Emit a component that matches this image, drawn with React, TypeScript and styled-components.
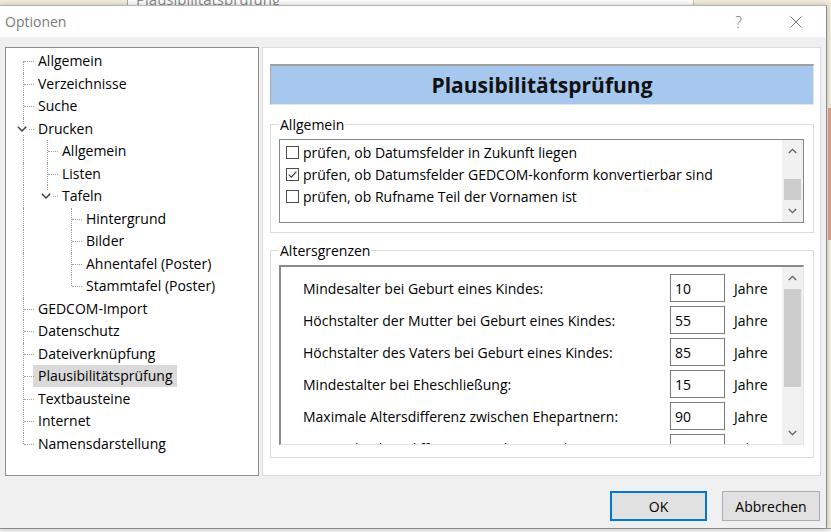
import React from 'react';
import styled, { createGlobalStyle, css } from 'styled-components';

const GlobalStyle = createGlobalStyle`
  html, body {
    margin: 0;
    padding: 0;
  }
  body {
    font-family: 'Open Sans', 'Noto Sans', sans-serif;
    font-size: 14px;
    color: #000;
    background: #f3eedc;
  }
  * {
    box-sizing: border-box;
  }
`;

const Desktop = styled.div`
  position: relative;
  width: 831px;
  height: 532px;
  overflow: hidden;
  background: #f3eedc;
`;

/* windows lying behind the dialog, only their edges are visible */
const BehindTop = styled.div`
  position: absolute;
  left: 127px;
  top: -30px;
  width: 567px;
  height: 35px;
  background: #fff;
  border-left: 1px solid #a8a8a8;
  border-right: 1px solid #c8c8c8;
  display: flex;
  align-items: flex-end;
  padding-left: 8px;
  color: #8a8a8a;
  font-size: 15px;
  line-height: 20px;
`;

const BehindTitle = styled.span`
  margin-bottom: -4px;
`;

const BehindStripe = styled.div`
  position: absolute;
  left: 828px;
  top: 108px;
  width: 3px;
  height: 132px;
  background: #e2a38c;
`;

const BehindBottom = styled.div`
  position: absolute;
  left: 0;
  right: 0;
  top: 528px;
  bottom: 0;
  background: #f0f0f0;
  border-top: 1px solid #9a9a9a;
`;

const Dialog = styled.div`
  position: absolute;
  left: 0;
  top: 5px;
  width: 827px;
  height: 523px;
  background: #f0f0f0;
  border-top: 1px solid #b4b4b4;
  border-right: 1px solid #8c8c8c;
  box-shadow: 0 0 6px rgba(0, 0, 0, 0.25);
  display: flex;
  flex-direction: column;
`;

const TitleBar = styled.div`
  height: 31px;
  flex: none;
  background: #fff;
  display: flex;
  align-items: center;
  padding-left: 5px;
  padding-right: 2px;
`;

const Caption = styled.div`
  flex: 1;
  color: #7a7a7a;
  font-size: 14px;
  padding-bottom: 1px;
`;

const CaptionButton = styled.div`
  width: 57px;
  height: 31px;
  display: flex;
  align-items: center;
  justify-content: center;
  color: #7a7a7a;
  font-size: 16px;
  font-weight: 300;
`;

const Body = styled.div`
  flex: 1;
  display: flex;
  flex-direction: column;
  padding: 10px 5px 0 5px;
`;

const Main = styled.div`
  height: 429px;
  display: flex;
  gap: 3px;
`;

const TreeBox = styled.div`
  width: 254px;
  flex: none;
  background: #fff;
  border: 1px solid #8d8d8d;
  padding: 2px 0 0 5px;
`;

const TreeRow = styled.div`
  height: 22.5px;
  display: flex;
  align-items: center;
`;

const dotted = '1px dotted #a0a0a0';

const Guide = styled.span<{ $line: boolean }>`
  position: relative;
  width: 24px;
  height: 100%;
  flex: none;
  ${(p) =>
    p.$line &&
    css`
      &::before {
        content: '';
        position: absolute;
        left: 12px;
        top: 0;
        bottom: 0;
        border-left: ${dotted};
      }
    `}
`;

const Joint = styled.span<{ $top: boolean; $bottom: boolean }>`
  position: relative;
  width: 24px;
  height: 100%;
  flex: none;

  &::before {
    content: '';
    position: absolute;
    left: 12px;
    top: ${(p) => (p.$top ? '0' : '50%')};
    bottom: ${(p) => (p.$bottom ? '0' : '50%')};
    border-left: ${dotted};
  }

  &::after {
    content: '';
    position: absolute;
    left: 13px;
    width: 10px;
    top: 50%;
    border-top: ${dotted};
  }
`;

const Expander = styled.span`
  position: absolute;
  z-index: 1;
  left: 4px;
  top: 50%;
  width: 13px;
  height: 10px;
  margin-top: -5px;
  background: #fff;
  display: flex;
  align-items: center;
  justify-content: center;
`;

const NodeLabel = styled.span<{ $selected?: boolean }>`
  height: 22px;
  line-height: 22px;
  padding: 0 5px;
  margin-left: -2px;
  white-space: nowrap;
  background: ${(p) => (p.$selected ? '#d9d9d9' : 'transparent')};
`;

const PagePanel = styled.div`
  flex: 1;
  background: #fff;
  border: 1px solid #dadada;
  padding: 16px 6px 0 7px;
  display: flex;
  flex-direction: column;
`;

const PageHeader = styled.div`
  height: 41px;
  flex: none;
  background: #a6c8ef;
  border-top: 2px solid #a0a0a0;
  border-left: 1px solid #a8a8a8;
  border-right: 1px solid #e6e6e6;
  border-bottom: 1px solid #e6e6e6;
  display: flex;
  align-items: center;
  justify-content: center;
  font-size: 21px;
  font-weight: 700;
  color: #111;
`;

const Group = styled.fieldset<{ $gap: number; $padTop: number; $padBottom: number }>`
  margin: ${(p) => p.$gap}px 0 0;
  padding: ${(p) => p.$padTop}px 9px ${(p) => p.$padBottom}px 8px;
  border: 1px solid #dcdcdc;
  min-width: 0;
`;

const Legend = styled.legend`
  padding: 0 1px;
  line-height: 19px;
  font-size: 14px;
`;

const CheckListBox = styled.div`
  height: 84px;
  border: 1px solid #828790;
  display: flex;
  background: #fff;
`;

const CheckItems = styled.div`
  flex: 1;
  padding-top: 1px;
`;

const CheckItem = styled.div`
  height: 22px;
  display: flex;
  align-items: center;
  padding-left: 6px;
  gap: 4px;
  white-space: nowrap;
`;

const CheckBox = styled.span`
  width: 13px;
  height: 13px;
  flex: none;
  border: 1px solid #4d4d4d;
  background: #fff;
  display: flex;
  align-items: center;
  justify-content: center;
`;

const LimitsBox = styled.div`
  height: 180px;
  background: #fff;
  border-top: 2px solid #8a8a8a;
  border-left: 2px solid #8a8a8a;
  border-right: 1px solid #e3e3e3;
  border-bottom: 1px solid #e3e3e3;
  display: flex;
  overflow: hidden;
`;

const LimitRows = styled.div`
  flex: 1;
  padding: 5px 0 0 22px;
  overflow: hidden;
`;

const LimitRow = styled.div`
  height: 32px;
  display: flex;
  align-items: center;
  white-space: nowrap;
`;

const LimitLabel = styled.span`
  width: 367px;
  flex: none;
`;

const NumberField = styled.input`
  width: 55px;
  height: 28px;
  flex: none;
  border: 1px solid #7a7a7a;
  padding: 0 0 0 4px;
  font: inherit;
  color: #000;
  background: #fff;
  outline: none;
`;

const Unit = styled.span`
  margin-left: 9px;
`;

const ScrollBar = styled.div`
  width: 21px;
  flex: none;
  background: #f0f0f0;
  display: flex;
  flex-direction: column;
`;

const ScrollArrow = styled.div`
  height: 22px;
  flex: none;
  display: flex;
  align-items: center;
  justify-content: center;
`;

const ScrollTrack = styled.div`
  flex: 1;
  padding: 0 2px;
`;

const ScrollThumb = styled.div<{ $offset: number; $size: number }>`
  margin-top: ${(p) => p.$offset}px;
  height: ${(p) => p.$size}px;
  background: #cdcdcd;
`;

const Footer = styled.div`
  display: flex;
  justify-content: flex-end;
  gap: 15px;
  padding: 15px 1px 0 0;
`;

const Button = styled.div<{ $default?: boolean; $width: number }>`
  width: ${(p) => p.$width}px;
  height: 30px;
  background: #e1e1e1;
  border: ${(p) => (p.$default ? '2px solid #0078d7' : '1px solid #adadad')};
  display: flex;
  align-items: center;
  justify-content: center;
  font-size: 14px;
`;

type TreeNode = { label: string; selected?: boolean; children?: TreeNode[] };

type FlatRow = {
  label: string;
  guides: boolean[];
  top: boolean;
  bottom: boolean;
  expanded: boolean;
  selected: boolean;
};

const tree: TreeNode[] = [
  { label: 'Allgemein' },
  { label: 'Verzeichnisse' },
  { label: 'Suche' },
  {
    label: 'Drucken',
    children: [
      { label: 'Allgemein' },
      { label: 'Listen' },
      {
        label: 'Tafeln',
        children: [
          { label: 'Hintergrund' },
          { label: 'Bilder' },
          { label: 'Ahnentafel (Poster)' },
          { label: 'Stammtafel (Poster)' },
        ],
      },
    ],
  },
  { label: 'GEDCOM-Import' },
  { label: 'Datenschutz' },
  { label: 'Dateiverknüpfung' },
  { label: 'Plausibilitätsprüfung', selected: true },
  { label: 'Textbausteine' },
  { label: 'Internet' },
  { label: 'Namensdarstellung' },
];

function flatten(nodes: TreeNode[], level: number, guides: boolean[]): FlatRow[] {
  const rows: FlatRow[] = [];
  nodes.forEach((node, i) => {
    const hasNext = i < nodes.length - 1;
    rows.push({
      label: node.label,
      guides,
      top: !(level === 0 && i === 0),
      bottom: hasNext,
      expanded: !!node.children,
      selected: !!node.selected,
    });
    if (node.children) {
      rows.push(...flatten(node.children, level + 1, [...guides, hasNext]));
    }
  });
  return rows;
}

const checks = [
  { text: 'prüfen, ob Datumsfelder in Zukunft liegen', checked: false },
  { text: 'prüfen, ob Datumsfelder GEDCOM-konform konvertierbar sind', checked: true },
  { text: 'prüfen, ob Rufname Teil der Vornamen ist', checked: false },
];

const limits = [
  { label: 'Mindesalter bei Geburt eines Kindes:', value: '10' },
  { label: 'Höchstalter der Mutter bei Geburt eines Kindes:', value: '55' },
  { label: 'Höchstalter des Vaters bei Geburt eines Kindes:', value: '85' },
  { label: 'Mindestalter bei Eheschließung:', value: '15' },
  { label: 'Maximale Altersdifferenz zwischen Ehepartnern:', value: '90' },
  { label: 'Maximale Altersdifferenz zwischen Geschwistern:', value: '' },
];

function Chevron({ up }: { up?: boolean }) {
  return (
    <svg width="9" height="6" viewBox="0 0 9 6">
      <path
        d={up ? 'M0.8 5 L4.5 1.3 L8.2 5' : 'M0.8 1 L4.5 4.7 L8.2 1'}
        fill="none"
        stroke="#606060"
        strokeWidth="1.3"
      />
    </svg>
  );
}

function Scroller({ offset, size }: { offset: number; size: number }) {
  return (
    <ScrollBar>
      <ScrollArrow>
        <Chevron up />
      </ScrollArrow>
      <ScrollTrack>
        <ScrollThumb $offset={offset} $size={size} />
      </ScrollTrack>
      <ScrollArrow>
        <Chevron />
      </ScrollArrow>
    </ScrollBar>
  );
}

function OptionTree() {
  const rows = flatten(tree, 0, []);
  return (
    <TreeBox>
      {rows.map((row, i) => (
        <TreeRow key={i}>
          {row.guides.map((line, j) => (
            <Guide key={j} $line={line} />
          ))}
          <Joint $top={row.top} $bottom={row.bottom}>
            {row.expanded && (
              <Expander>
                <svg width="10" height="6" viewBox="0 0 10 6">
                  <path d="M0.8 0.8 L5 5 L9.2 0.8" fill="none" stroke="#3c3c3c" strokeWidth="1.4" />
                </svg>
              </Expander>
            )}
          </Joint>
          <NodeLabel $selected={row.selected}>{row.label}</NodeLabel>
        </TreeRow>
      ))}
    </TreeBox>
  );
}

export default function App() {
  return (
    <Desktop>
      <GlobalStyle />
      <BehindTop>
        <BehindTitle>Plausibilitätsprüfung</BehindTitle>
      </BehindTop>
      <BehindStripe />
      <BehindBottom />

      <Dialog>
        <TitleBar>
          <Caption>Optionen</Caption>
          <CaptionButton>?</CaptionButton>
          <CaptionButton>
            <svg width="12" height="12" viewBox="0 0 12 12">
              <path d="M0.5 0.5 L11.5 11.5 M11.5 0.5 L0.5 11.5" stroke="#7a7a7a" strokeWidth="1" />
            </svg>
          </CaptionButton>
        </TitleBar>

        <Body>
          <Main>
            <OptionTree />

            <PagePanel>
              <PageHeader>Plausibilitätsprüfung</PageHeader>

              <Group $gap={10} $padTop={5} $padBottom={9}>
                <Legend>Allgemein</Legend>
                <CheckListBox>
                  <CheckItems>
                    {checks.map((c) => (
                      <CheckItem key={c.text}>
                        <CheckBox>
                          {c.checked && (
                            <svg width="11" height="11" viewBox="0 0 11 11">
                              <path d="M1.8 5.6 L4.3 8.1 L9.4 2.6" fill="none" stroke="#333" strokeWidth="1.1" />
                            </svg>
                          )}
                        </CheckBox>
                        {c.text}
                      </CheckItem>
                    ))}
                  </CheckItems>
                  <Scroller offset={17} size={21} />
                </CheckListBox>
              </Group>

              <Group $gap={8} $padTop={5} $padBottom={12}>
                <Legend>Altersgrenzen</Legend>
                <LimitsBox>
                  <LimitRows>
                    {limits.map((l) => (
                      <LimitRow key={l.label}>
                        <LimitLabel>{l.label}</LimitLabel>
                        <NumberField readOnly value={l.value} />
                        <Unit>Jahre</Unit>
                      </LimitRow>
                    ))}
                  </LimitRows>
                  <Scroller offset={0} size={98} />
                </LimitsBox>
              </Group>
            </PagePanel>
          </Main>

          <Footer>
            <Button $default $width={97}>
              OK
            </Button>
            <Button $width={98}>Abbrechen</Button>
          </Footer>
        </Body>
      </Dialog>
    </Desktop>
  );
}
